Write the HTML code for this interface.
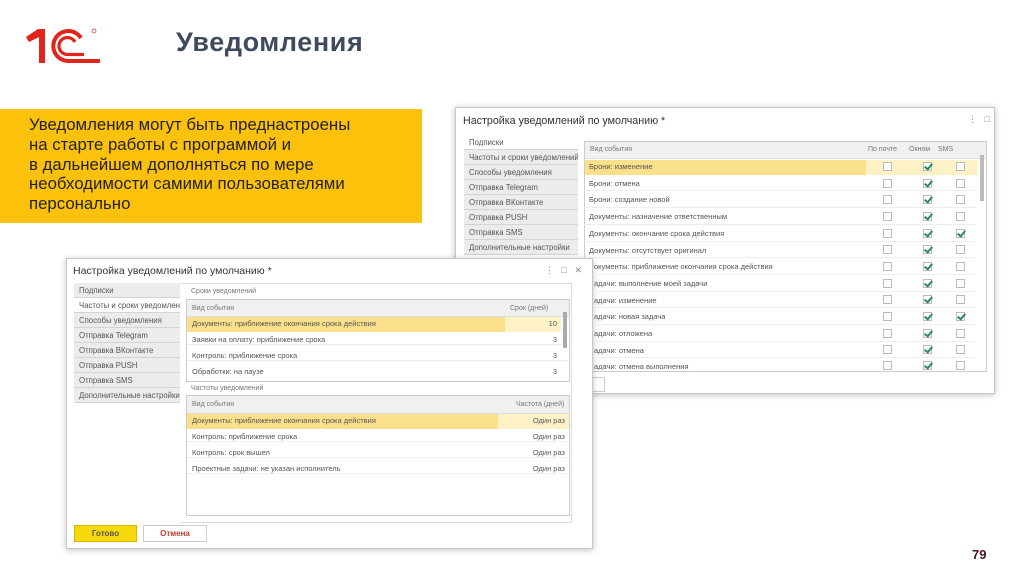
<!DOCTYPE html>
<html><head><meta charset="utf-8"><style>
*{margin:0;padding:0;box-sizing:border-box}
body{width:1024px;height:574px;background:#fff;position:relative;overflow:hidden;font-family:"Liberation Sans",Arial,sans-serif}
.abs{position:absolute}
.win{position:absolute;background:#fff;border:1px solid #c8c8c8;box-shadow:0 1px 6px rgba(0,0,0,.25)}
.t{font-size:8px;color:#555;white-space:nowrap;position:absolute}
.nav div{height:15px;border-bottom:1px solid #d4d4d4;background:#ececec;font-size:7.8px;color:#555;padding:3px 0 0 5px;white-space:nowrap;overflow:hidden}
.cb{position:absolute;width:9px;height:9px;border:1px solid #bbb;background:#fff}
.ck{position:absolute;width:9px;height:9px;border:1px solid #bbb;background:#fff}
.ck:after{content:"";position:absolute;left:2px;top:-1px;width:3px;height:6px;border:solid #2a8a5a;border-width:0 2px 2px 0;transform:rotate(40deg)}
.row{position:absolute;left:0;right:0;border-bottom:1px solid #eee;font-size:7.5px;color:#555;padding-left:5px;white-space:nowrap}
</style></head><body>
<svg class="abs" style="left:24px;top:27px" width="80" height="38" viewBox="0 0 80 38">
<polygon points="2,10 14,2 21,2 21,36 15,36 15,10 5,15" fill="#e1251b"/>
<path d="M44 34 A15 15 0 1 1 57 11" fill="none" stroke="#e1251b" stroke-width="4"/>
<path d="M44 27.5 A8.5 8.5 0 1 1 51 15" fill="none" stroke="#e1251b" stroke-width="3.2"/>
<path d="M44 34 H76" stroke="#e1251b" stroke-width="4"/>
<path d="M44 27.5 H60" stroke="#e1251b" stroke-width="3.2"/>
<circle cx="70" cy="4" r="2" fill="none" stroke="#e1251b" stroke-width=".7"/>
</svg>
<div class="abs" style="left:176px;top:27px;font-size:27px;font-weight:bold;color:#404a5e;letter-spacing:.6px">Уведомления</div>
<div class="abs" style="left:0;top:109px;width:422px;height:114px;background:#fcc10a"></div>
<div class="abs" style="left:29px;top:115px;font-size:16.8px;line-height:19.8px;color:#222">Уведомления могут быть преднастроены<br>на старте работы с программой и<br>в дальнейшем дополняться по мере<br>необходимости самими пользователями<br>персонально</div>
<div class="abs" style="left:972px;top:547px;font-size:13px;font-weight:bold;color:#4a1020">79</div>

<!-- right window -->
<div class="win" style="left:455px;top:107px;width:540px;height:287px">
 <div class="abs" style="left:7px;top:7px;font-size:10.7px;color:#333">Настройка уведомлений по умолчанию *</div>
 <div class="abs" style="left:512px;top:6px;font-size:9px;color:#888">⋮&nbsp;&nbsp;&nbsp;□</div>
 <div class="abs nav" style="left:8px;top:27px;width:114px"><div style="background:#fff">Подписки</div><div>Частоты и сроки уведомлений</div><div>Способы уведомления</div><div>Отправка Telegram</div><div>Отправка ВКонтакте</div><div>Отправка PUSH</div><div>Отправка SMS</div><div>Дополнительные настройки</div></div>
 <div class="abs" style="left:128px;top:33px;width:403px;height:231px;border:1px solid #ccc;overflow:hidden">
  <div class="abs" style="left:0;top:0;right:0;height:17px;background:#f0f0f0;border-bottom:1px solid #ddd"></div>
  <div class="t" style="left:5px;top:4px;font-size:7px;color:#777">Вид события</div>
  <div class="t" style="left:283px;top:4px;font-size:7px;color:#777">По почте</div>
  <div class="t" style="left:324px;top:4px;font-size:7px;color:#777">Окном</div>
  <div class="t" style="left:353px;top:4px;font-size:7px;color:#777">SMS</div>
  <div class="abs" style="left:0;top:18px;width:281px;height:15px;background:#fae08a"></div>
  <div class="abs" style="left:281px;top:18px;width:112px;height:15px;background:#fdf2c6"></div>
  <div class="abs" style="right:2px;top:13px;width:4px;height:46px;background:#bbb"></div>
 </div>
</div>
<div class="abs" style="left:590px;top:377px;width:15px;height:15px;border:1px solid #ccc;background:#fff"></div>

<!-- left window -->
<div class="win" style="left:66px;top:258px;width:527px;height:291px">
 <div class="abs" style="left:6px;top:6px;font-size:10.5px;color:#333">Настройка уведомлений по умолчанию *</div>
 <div class="abs" style="left:478px;top:6px;font-size:9px;color:#888">⋮&nbsp;&nbsp;&nbsp;□&nbsp;&nbsp;&nbsp;✕</div>
 <div class="abs nav" style="left:7px;top:24px;width:106px"><div>Подписки</div><div style="background:#fff">Частоты и сроки уведомлений</div><div>Способы уведомления</div><div>Отправка Telegram</div><div>Отправка ВКонтакте</div><div>Отправка PUSH</div><div>Отправка SMS</div><div>Дополнительные настройки</div></div>
 <div class="abs" style="left:113px;top:24px;width:392px;height:240px;border:1px solid #ddd;border-left:none"></div>
 <div class="t" style="left:124px;top:29px;font-size:7px;color:#777">Сроки уведомлений</div>
 <div class="abs" style="left:119px;top:40px;width:384px;height:83px;border:1px solid #ccc;overflow:hidden">
  <div class="abs" style="left:0;top:0;right:0;height:17px;background:#f0f0f0;border-bottom:1px solid #ddd"></div>
  <div class="t" style="left:5px;top:5px;font-size:7px;color:#777">Вид события</div>
  <div class="t" style="left:323px;top:5px;font-size:7px;color:#777">Срок (дней)</div>
  <div class="abs" style="left:0;top:17px;width:318px;height:15px;background:#fae08a"></div>
  <div class="abs" style="left:318px;top:17px;width:56px;height:15px;background:#fdf2c6"></div>
  <div class="row" style="top:19px;border:none">Документы: приближение окончания срока действия<span style="position:absolute;right:12px">10</span></div>
  <div class="row" style="top:35px">Заявки на оплату: приближение срока<span style="position:absolute;right:12px">3</span></div>
  <div class="row" style="top:51px">Контроль: приближение срока<span style="position:absolute;right:12px">3</span></div>
  <div class="row" style="top:67px;border:none">Обработки: на паузе<span style="position:absolute;right:12px">3</span></div>
  <div class="abs" style="right:2px;top:12px;width:4px;height:36px;background:#aaa"></div>
 </div>
 <div class="t" style="left:124px;top:126px;font-size:7px;color:#777">Частоты уведомлений</div>
 <div class="abs" style="left:119px;top:136px;width:384px;height:121px;border:1px solid #ccc;overflow:hidden">
  <div class="abs" style="left:0;top:0;right:0;height:18px;background:#f0f0f0;border-bottom:1px solid #ddd"></div>
  <div class="t" style="left:5px;top:5px;font-size:7px;color:#777">Вид события</div>
  <div class="t" style="left:329px;top:5px;font-size:7px;color:#777">Частота (дней)</div>
  <div class="abs" style="left:0;top:18px;width:311px;height:15px;background:#fae08a"></div>
  <div class="abs" style="left:311px;top:18px;width:73px;height:15px;background:#fdf2c6"></div>
  <div class="row" style="top:20px;border:none">Документы: приближение окончания срока действия<span style="position:absolute;right:4px">Один раз</span></div>
  <div class="row" style="top:36px">Контроль: приближение срока<span style="position:absolute;right:4px">Один раз</span></div>
  <div class="row" style="top:52px">Контроль: срок вышел<span style="position:absolute;right:4px">Один раз</span></div>
  <div class="row" style="top:68px">Проектные задачи: не указан исполнитель<span style="position:absolute;right:4px">Один раз</span></div>
 </div>
 <div class="abs" style="left:7px;top:266px;width:63px;height:17px;background:#f5d90a;border:1px solid #d4b800;font-size:8px;font-weight:bold;color:#555;text-align:center;line-height:15px">Готово</div>
 <div class="abs" style="left:76px;top:266px;width:64px;height:17px;background:#fff;border:1px solid #ccc;font-size:8px;font-weight:bold;color:#c0392b;text-align:center;line-height:15px">Отмена</div>
</div>

<div class="abs" style="left:584px;top:158px;width:392px;height:212px;overflow:hidden">
 <div class="row" style="top:0;height:16px;padding-top:4px;border:none">Брони: изменение</div>
 <div class="row" style="top:17px;height:16px;padding-top:4px">Брони: отмена</div>
 <div class="row" style="top:33px;height:17px;padding-top:4px">Брони: создание новой</div>
 <div class="row" style="top:50px;height:17px;padding-top:4px">Документы: назначение ответственным</div>
 <div class="row" style="top:67px;height:17px;padding-top:4px">Документы: окончание срока действия</div>
 <div class="row" style="top:84px;height:16px;padding-top:4px">Документы: отсутствует оригинал</div>
 <div class="row" style="top:100px;height:17px;padding-top:4px;left:10px;padding-left:0">окументы: приближение окончания срока действия</div>
 <div class="row" style="top:117px;height:17px;padding-top:4px;left:10px;padding-left:0">адачи: выполнение моей задачи</div>
 <div class="row" style="top:134px;height:16px;padding-top:4px;left:10px;padding-left:0">адачи: изменение</div>
 <div class="row" style="top:150px;height:17px;padding-top:4px;left:10px;padding-left:0">адачи: новая задача</div>
 <div class="row" style="top:167px;height:17px;padding-top:4px;left:10px;padding-left:0">адачи: отложена</div>
 <div class="row" style="top:184px;height:16px;padding-top:4px;left:10px;padding-left:0">адачи: отмена</div>
 <div class="row" style="top:200px;height:16px;padding-top:4px;left:10px;padding-left:0">адачи: отмена выполнения</div>
</div>
<div class="cb" style="left:883px;top:162px"></div><div class="ck" style="left:923px;top:162px"></div><div class="cb" style="left:956px;top:162px"></div>
<div class="cb" style="left:883px;top:179px"></div><div class="ck" style="left:923px;top:179px"></div><div class="cb" style="left:956px;top:179px"></div>
<div class="cb" style="left:883px;top:195px"></div><div class="ck" style="left:923px;top:195px"></div><div class="cb" style="left:956px;top:195px"></div>
<div class="cb" style="left:883px;top:212px"></div><div class="ck" style="left:923px;top:212px"></div><div class="cb" style="left:956px;top:212px"></div>
<div class="cb" style="left:883px;top:229px"></div><div class="ck" style="left:923px;top:229px"></div><div class="ck" style="left:956px;top:229px"></div>
<div class="cb" style="left:883px;top:245px"></div><div class="ck" style="left:923px;top:245px"></div><div class="cb" style="left:956px;top:245px"></div>
<div class="cb" style="left:883px;top:262px"></div><div class="ck" style="left:923px;top:262px"></div><div class="cb" style="left:956px;top:262px"></div>
<div class="cb" style="left:883px;top:279px"></div><div class="ck" style="left:923px;top:279px"></div><div class="cb" style="left:956px;top:279px"></div>
<div class="cb" style="left:883px;top:295px"></div><div class="ck" style="left:923px;top:295px"></div><div class="cb" style="left:956px;top:295px"></div>
<div class="cb" style="left:883px;top:312px"></div><div class="ck" style="left:923px;top:312px"></div><div class="ck" style="left:956px;top:312px"></div>
<div class="cb" style="left:883px;top:329px"></div><div class="ck" style="left:923px;top:329px"></div><div class="cb" style="left:956px;top:329px"></div>
<div class="cb" style="left:883px;top:345px"></div><div class="ck" style="left:923px;top:345px"></div><div class="cb" style="left:956px;top:345px"></div>
<div class="cb" style="left:883px;top:361px"></div><div class="ck" style="left:923px;top:361px"></div><div class="cb" style="left:956px;top:361px"></div>
</body></html>
